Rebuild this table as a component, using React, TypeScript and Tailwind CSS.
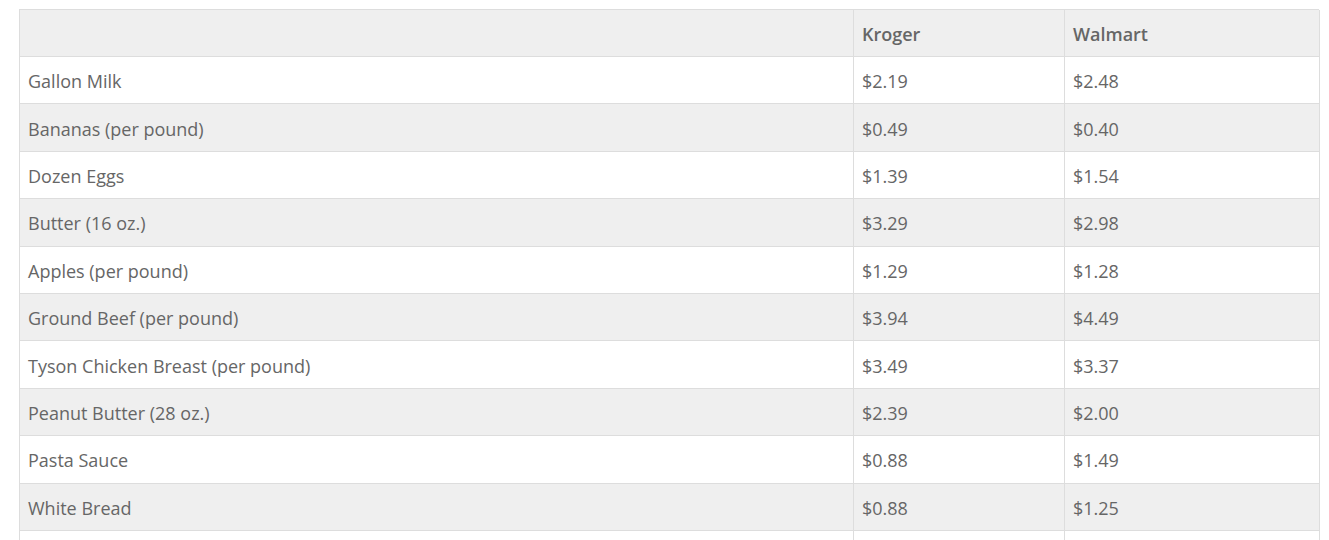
import React from "react";

const rows: [string, string, string][] = [
  ["Gallon Milk", "$2.19", "$2.48"],
  ["Bananas (per pound)", "$0.49", "$0.40"],
  ["Dozen Eggs", "$1.39", "$1.54"],
  ["Butter (16 oz.)", "$3.29", "$2.98"],
  ["Apples (per pound)", "$1.29", "$1.28"],
  ["Ground Beef (per pound)", "$3.94", "$4.49"],
  ["Tyson Chicken Breast (per pound)", "$3.49", "$3.37"],
  ["Peanut Butter (28 oz.)", "$2.39", "$2.00"],
  ["Pasta Sauce", "$0.88", "$1.49"],
  ["White Bread", "$0.88", "$1.25"],
  ["", "", ""],
];

export default function App() {
  return (
    <div className="h-[540px] w-[1329px] overflow-hidden bg-white pl-[19px] pt-[9px] font-['Open_Sans',sans-serif] text-[18px] text-[#666]">
      <div className="w-[1300px] border-l border-t border-[#dddddd]">
        <div className="grid h-[47px] grid-cols-[834px_211px_255px] bg-[#efefef] font-semibold">
          <div className="border-b border-r border-[#dddddd]" />
          <div className="flex items-center border-b border-r border-[#dddddd] pl-2 pt-[2px]">Kroger</div>
          <div className="flex items-center border-b border-r border-[#dddddd] pl-2 pt-[2px]">Walmart</div>
        </div>
        {rows.map((r, i) => (
          <div
            key={i}
            className={`grid h-[47.4px] grid-cols-[834px_211px_255px] ${i % 2 === 1 ? "bg-[#efefef]" : "bg-white"}`}
          >
            {r.map((c, j) => (
              <div key={j} className="flex items-center border-b border-r border-[#dddddd] pl-2 pt-[3px]">
                {c}
              </div>
            ))}
          </div>
        ))}
      </div>
    </div>
  );
}
